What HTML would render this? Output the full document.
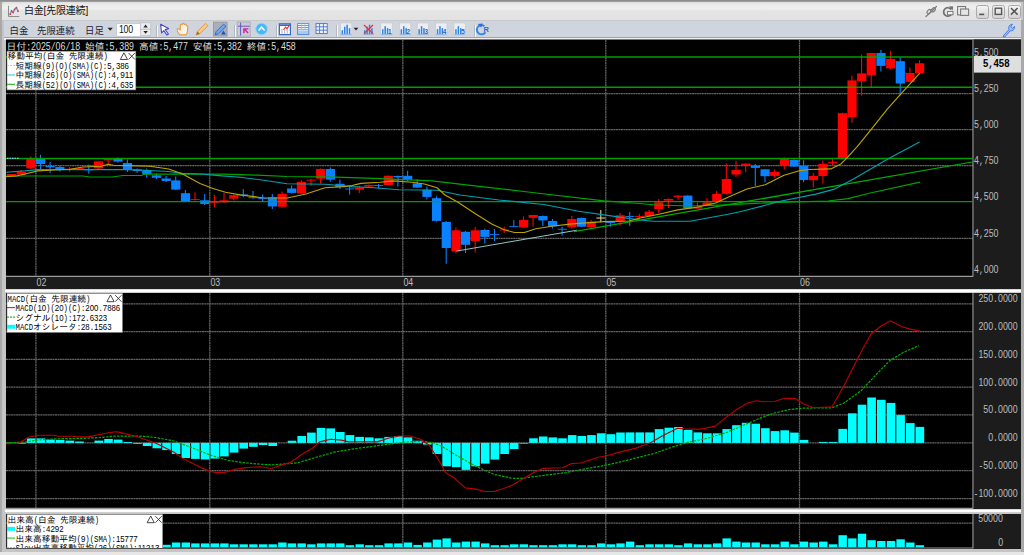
<!DOCTYPE html>
<html lang="ja"><head><meta charset="utf-8"><title>白金[先限連続]</title>
<style>
html,body{margin:0;padding:0;background:#b2b2b2;}
body{width:1024px;height:555px;overflow:hidden;position:relative;font-family:"Liberation Sans","Noto Sans CJK JP",sans-serif;}
#win{position:absolute;left:0;top:0;width:1024px;height:555px;background:#a9a9a9;overflow:hidden}
#inner{position:absolute;left:1.8px;top:2px;width:1021px;height:549.6px;background:#c5c5c5}
#rb{position:absolute;left:1020.6px;top:20px;width:2.2px;height:531.5px;background:#a9a9a9}
#topedge{position:absolute;left:0;top:0;width:1024px;height:2px;background:linear-gradient(#868686,#a4a4a4)}
#title{position:absolute;left:2px;top:2px;width:1019px;height:18px;background:linear-gradient(#dedede,#ebebeb 14%,#f0f0f0 35%,#e4e4e4 50%,#e2e2e2);border-radius:3px 3px 0 0}
#title .cap{position:absolute;left:22px;top:3px;font-size:10px;line-height:12px;color:#111;letter-spacing:-0.2px;white-space:nowrap}
#tool{position:absolute;left:4px;top:20px;width:1017px;height:17.7px;background:#d0d4dc;border-top:1px solid #c6c8cc;border-bottom:1px solid #9aa3b3;box-sizing:border-box}
#tool .t{position:absolute;top:4px;font-size:9.4px;line-height:11px;color:#223;white-space:nowrap}
#spin{position:absolute;left:111.5px;top:2px;width:35.5px;height:13.5px;background:#fff;border:1px solid #c8ccd4;box-sizing:border-box}
#spin span{position:absolute;left:2.5px;top:0px;font-size:10.2px;line-height:11.5px;color:#111;letter-spacing:-0.3px;transform:scaleX(.86);transform-origin:0 0}
.sep{position:absolute;top:3.5px;width:1px;height:12px;background:#f6f6f8;border-left:1px solid #b4b8c0}
#underline{position:absolute;left:4px;top:37.7px;width:1017px;height:2px;background:#f0f0f0}
.hsep{position:absolute;left:5px;width:1016px;height:4px;background:linear-gradient(#c4c4c4,#fff 35%,#fff 60%,#b8b8b8)}
#botedge{position:absolute;left:0;top:551.5px;width:1024px;height:3.5px;background:#e7e7e7}
svg text.j{font-family:"Liberation Mono","IPAGothic","Noto Sans CJK JP",monospace}
svg text.m{font-family:"Liberation Mono",monospace}
svg text.s{font-family:"Liberation Sans",sans-serif}
svg{position:absolute;left:0;top:0}
.wb{position:absolute;top:2.5px;width:13px;height:14px;border:1px solid #a9a9a9;border-radius:2.5px;background:linear-gradient(#f4f4f4,#d2d2d2);box-sizing:border-box}
</style></head><body>
<div id="win">
<div id="inner"></div><div id="rb"></div>
<div id="topedge"></div>
<div id="title"><span class="cap">白金[先限連続]</span>
<div class="wb" style="left:973.5px"></div><div class="wb" style="left:989.7px"></div><div class="wb" style="left:1005.5px"></div>
</div>
<div id="tool">
<span class="t" style="left:5.5px">白金</span><span class="t" style="left:33px">先限連続</span><span class="t" style="left:81px">日足</span>
<div id="spin"><span>100</span></div>
<div class="sep" style="left:151.5px"></div><div class="sep" style="left:229.5px"></div><div class="sep" style="left:271.5px"></div><div class="sep" style="left:331.5px"></div><div class="sep" style="left:469.5px"></div>
</div>
<div id="underline"></div>
<div class="hsep" style="top:289.3px"></div>
<div class="hsep" style="top:509.3px"></div>
<div id="botedge"></div>
<svg id="chart" width="1024" height="555" viewBox="0 0 1024 555">
<rect x="6" y="39.5" width="1015" height="249.5" fill="#000"/>
<rect x="974" y="39.5" width="47" height="249.5" fill="#1c1c1c"/>
<rect x="6" y="277" width="1015" height="12" fill="#1c1c1c"/>
<rect x="6" y="293" width="1015" height="216" fill="#000"/>
<rect x="974" y="293" width="47" height="216" fill="#1c1c1c"/>
<rect x="6" y="514" width="1015" height="35" fill="#000"/>
<rect x="974" y="514" width="47" height="35" fill="#1c1c1c"/>
<line x1="6" x2="973" y1="93.6" y2="93.6" stroke="#646464" stroke-width="1.25" stroke-dasharray="2 0.45"/>
<line x1="6" x2="973" y1="129.7" y2="129.7" stroke="#646464" stroke-width="1.25" stroke-dasharray="2 0.45"/>
<line x1="6" x2="973" y1="165.7" y2="165.7" stroke="#646464" stroke-width="1.25" stroke-dasharray="2 0.45"/>
<line x1="6" x2="973" y1="238.3" y2="238.3" stroke="#646464" stroke-width="1.25" stroke-dasharray="2 0.45"/>
<line x1="35.9" x2="35.9" y1="40" y2="276" stroke="#646464" stroke-width="1.25" stroke-dasharray="2 0.45"/>
<line x1="209.8" x2="209.8" y1="40" y2="276" stroke="#646464" stroke-width="1.25" stroke-dasharray="2 0.45"/>
<line x1="402.8" x2="402.8" y1="40" y2="276" stroke="#646464" stroke-width="1.25" stroke-dasharray="2 0.45"/>
<line x1="605.8" x2="605.8" y1="40" y2="276" stroke="#646464" stroke-width="1.25" stroke-dasharray="2 0.45"/>
<line x1="799.5" x2="799.5" y1="40" y2="276" stroke="#646464" stroke-width="1.25" stroke-dasharray="2 0.45"/>
<line x1="6" x2="973" y1="303.8" y2="303.8" stroke="#646464" stroke-width="1.25" stroke-dasharray="2 0.45"/>
<line x1="6" x2="973" y1="331.6" y2="331.6" stroke="#646464" stroke-width="1.25" stroke-dasharray="2 0.45"/>
<line x1="6" x2="973" y1="359.3" y2="359.3" stroke="#646464" stroke-width="1.25" stroke-dasharray="2 0.45"/>
<line x1="6" x2="973" y1="387.1" y2="387.1" stroke="#646464" stroke-width="1.25" stroke-dasharray="2 0.45"/>
<line x1="6" x2="973" y1="414.9" y2="414.9" stroke="#646464" stroke-width="1.25" stroke-dasharray="2 0.45"/>
<line x1="6" x2="973" y1="442.8" y2="442.8" stroke="#646464" stroke-width="1.25" stroke-dasharray="2 0.45"/>
<line x1="6" x2="973" y1="470.6" y2="470.6" stroke="#646464" stroke-width="1.25" stroke-dasharray="2 0.45"/>
<line x1="6" x2="973" y1="498.5" y2="498.5" stroke="#646464" stroke-width="1.25" stroke-dasharray="2 0.45"/>
<line x1="35.9" x2="35.9" y1="293" y2="508" stroke="#646464" stroke-width="1.25" stroke-dasharray="2 0.45"/>
<line x1="209.8" x2="209.8" y1="293" y2="508" stroke="#646464" stroke-width="1.25" stroke-dasharray="2 0.45"/>
<line x1="402.8" x2="402.8" y1="293" y2="508" stroke="#646464" stroke-width="1.25" stroke-dasharray="2 0.45"/>
<line x1="605.8" x2="605.8" y1="293" y2="508" stroke="#646464" stroke-width="1.25" stroke-dasharray="2 0.45"/>
<line x1="799.5" x2="799.5" y1="293" y2="508" stroke="#646464" stroke-width="1.25" stroke-dasharray="2 0.45"/>
<line x1="6" x2="973" y1="523.2" y2="523.2" stroke="#646464" stroke-width="1.25" stroke-dasharray="2 0.45"/>
<line x1="35.9" x2="35.9" y1="514" y2="548" stroke="#646464" stroke-width="1.25" stroke-dasharray="2 0.45"/>
<line x1="209.8" x2="209.8" y1="514" y2="548" stroke="#646464" stroke-width="1.25" stroke-dasharray="2 0.45"/>
<line x1="402.8" x2="402.8" y1="514" y2="548" stroke="#646464" stroke-width="1.25" stroke-dasharray="2 0.45"/>
<line x1="605.8" x2="605.8" y1="514" y2="548" stroke="#646464" stroke-width="1.25" stroke-dasharray="2 0.45"/>
<line x1="799.5" x2="799.5" y1="514" y2="548" stroke="#646464" stroke-width="1.25" stroke-dasharray="2 0.45"/>
<line x1="6" x2="973" y1="276.3" y2="276.3" stroke="#9a9a9a" stroke-width="1.2"/>
<line x1="973" x2="973" y1="40" y2="276.8" stroke="#9a9a9a" stroke-width="1.2"/>
<line x1="6" x2="973" y1="508.3" y2="508.3" stroke="#9a9a9a" stroke-width="1.2"/>
<line x1="973" x2="973" y1="293" y2="508.8" stroke="#9a9a9a" stroke-width="1.2"/>
<line x1="6" x2="973" y1="548" y2="548" stroke="#9a9a9a" stroke-width="1.2"/>
<line x1="973" x2="973" y1="514" y2="548.5" stroke="#9a9a9a" stroke-width="1.2"/>
<line x1="11.5" x2="11.5" y1="174" y2="176" stroke="#ff0000" stroke-width="1.1"/>
<rect x="7.0" y="174" width="9.2" height="2.0" fill="#ff0000"/>
<line x1="21.2" x2="21.2" y1="170" y2="175" stroke="#ff0000" stroke-width="1.1"/>
<rect x="16.7" y="172" width="9.2" height="2.7" fill="#ff0000"/>
<line x1="30.8" x2="30.8" y1="156.4" y2="169" stroke="#ff0000" stroke-width="1.1"/>
<rect x="26.3" y="158.9" width="9.2" height="9.5" fill="#ff0000"/>
<line x1="40.5" x2="40.5" y1="154.9" y2="169.6" stroke="#0a82ff" stroke-width="1.1"/>
<rect x="36.0" y="159" width="9.2" height="5.0" fill="#0a82ff"/>
<line x1="50.1" x2="50.1" y1="162" y2="173" stroke="#0a82ff" stroke-width="1.1"/>
<rect x="45.6" y="166" width="9.2" height="1.3" fill="#0a82ff"/>
<line x1="59.8" x2="59.8" y1="165.8" y2="171.5" stroke="#0a82ff" stroke-width="1.1"/>
<rect x="55.3" y="167" width="9.2" height="2.3" fill="#0a82ff"/>
<line x1="69.5" x2="69.5" y1="167" y2="171.5" stroke="#ff0000" stroke-width="1.1"/>
<rect x="65.0" y="168.7" width="9.2" height="1.3" fill="#ff0000"/>
<line x1="79.1" x2="79.1" y1="167.5" y2="169.5" stroke="#ff0000" stroke-width="1.1"/>
<rect x="74.6" y="168" width="9.2" height="0.9" fill="#ff0000"/>
<line x1="88.8" x2="88.8" y1="164.6" y2="173.8" stroke="#0a82ff" stroke-width="1.1"/>
<rect x="84.3" y="169.2" width="9.2" height="1.1" fill="#0a82ff"/>
<line x1="98.4" x2="98.4" y1="161" y2="169" stroke="#ff0000" stroke-width="1.1"/>
<rect x="93.9" y="161.4" width="9.2" height="7.0" fill="#ff0000"/>
<line x1="108.1" x2="108.1" y1="158.5" y2="164.6" stroke="#ff0000" stroke-width="1.1"/>
<rect x="103.6" y="159" width="9.2" height="1.4" fill="#ff0000"/>
<line x1="117.8" x2="117.8" y1="157.4" y2="162.5" stroke="#0a82ff" stroke-width="1.1"/>
<rect x="113.3" y="158.8" width="9.2" height="2.8" fill="#0a82ff"/>
<line x1="127.4" x2="127.4" y1="159.5" y2="172" stroke="#0a82ff" stroke-width="1.1"/>
<rect x="122.9" y="163" width="9.2" height="6.6" fill="#0a82ff"/>
<line x1="137.1" x2="137.1" y1="168.4" y2="172.8" stroke="#0a82ff" stroke-width="1.1"/>
<rect x="132.6" y="169.3" width="9.2" height="1.7" fill="#0a82ff"/>
<line x1="146.7" x2="146.7" y1="168.4" y2="177.8" stroke="#0a82ff" stroke-width="1.1"/>
<rect x="142.2" y="170" width="9.2" height="4.0" fill="#0a82ff"/>
<line x1="156.4" x2="156.4" y1="173.4" y2="179" stroke="#0a82ff" stroke-width="1.1"/>
<rect x="151.9" y="175.3" width="9.2" height="2.5" fill="#0a82ff"/>
<line x1="166.1" x2="166.1" y1="176" y2="182" stroke="#0a82ff" stroke-width="1.1"/>
<rect x="161.6" y="178.5" width="9.2" height="2.5" fill="#0a82ff"/>
<line x1="175.7" x2="175.7" y1="176.6" y2="190" stroke="#0a82ff" stroke-width="1.1"/>
<rect x="171.2" y="180.4" width="9.2" height="9.2" fill="#0a82ff"/>
<line x1="185.4" x2="185.4" y1="190" y2="202" stroke="#0a82ff" stroke-width="1.1"/>
<rect x="180.9" y="193.2" width="9.2" height="8.2" fill="#0a82ff"/>
<line x1="195.0" x2="195.0" y1="192.3" y2="200.5" stroke="#ff0000" stroke-width="1.1"/>
<rect x="190.5" y="199" width="9.2" height="0.9" fill="#ff0000"/>
<line x1="204.7" x2="204.7" y1="194" y2="205" stroke="#0a82ff" stroke-width="1.1"/>
<rect x="200.2" y="200.3" width="9.2" height="3.7" fill="#0a82ff"/>
<line x1="214.4" x2="214.4" y1="194.9" y2="207.5" stroke="#ff0000" stroke-width="1.1"/>
<rect x="209.9" y="202.2" width="9.2" height="0.9" fill="#ff0000"/>
<line x1="224.0" x2="224.0" y1="193" y2="203" stroke="#ff0000" stroke-width="1.1"/>
<rect x="219.5" y="200.3" width="9.2" height="2.0" fill="#ff0000"/>
<line x1="233.7" x2="233.7" y1="194.5" y2="200.5" stroke="#ff0000" stroke-width="1.1"/>
<rect x="229.2" y="195.2" width="9.2" height="3.4" fill="#ff0000"/>
<line x1="243.3" x2="243.3" y1="189" y2="197" stroke="#0a82ff" stroke-width="1.1"/>
<rect x="238.8" y="194.4" width="9.2" height="0.9" fill="#0a82ff"/>
<line x1="253.0" x2="253.0" y1="191" y2="198.5" stroke="#0a82ff" stroke-width="1.1"/>
<rect x="248.5" y="197.3" width="9.2" height="0.9" fill="#0a82ff"/>
<line x1="262.7" x2="262.7" y1="194.4" y2="201.5" stroke="#0a82ff" stroke-width="1.1"/>
<rect x="258.2" y="198" width="9.2" height="0.9" fill="#0a82ff"/>
<line x1="272.3" x2="272.3" y1="193.9" y2="209" stroke="#0a82ff" stroke-width="1.1"/>
<rect x="267.8" y="197.3" width="9.2" height="9.1" fill="#0a82ff"/>
<line x1="282.0" x2="282.0" y1="191.6" y2="207.8" stroke="#ff0000" stroke-width="1.1"/>
<rect x="277.5" y="193.9" width="9.2" height="12.8" fill="#ff0000"/>
<line x1="291.6" x2="291.6" y1="185.6" y2="193.5" stroke="#0a82ff" stroke-width="1.1"/>
<rect x="287.1" y="188.5" width="9.2" height="4.4" fill="#0a82ff"/>
<line x1="301.3" x2="301.3" y1="180" y2="194" stroke="#ff0000" stroke-width="1.1"/>
<rect x="296.8" y="182" width="9.2" height="11.5" fill="#ff0000"/>
<line x1="311.0" x2="311.0" y1="179" y2="186" stroke="#ff0000" stroke-width="1.1"/>
<rect x="306.5" y="179.6" width="9.2" height="1.0" fill="#ff0000"/>
<line x1="320.6" x2="320.6" y1="168.5" y2="183.8" stroke="#ff0000" stroke-width="1.1"/>
<rect x="316.1" y="169" width="9.2" height="9.7" fill="#ff0000"/>
<line x1="330.3" x2="330.3" y1="167.6" y2="181.8" stroke="#0a82ff" stroke-width="1.1"/>
<rect x="325.8" y="169" width="9.2" height="10.6" fill="#0a82ff"/>
<line x1="339.9" x2="339.9" y1="179.6" y2="188.9" stroke="#0a82ff" stroke-width="1.1"/>
<rect x="335.4" y="183.8" width="9.2" height="3.2" fill="#0a82ff"/>
<line x1="349.6" x2="349.6" y1="186.6" y2="194.8" stroke="#0a82ff" stroke-width="1.1"/>
<rect x="345.1" y="188.5" width="9.2" height="0.9" fill="#0a82ff"/>
<line x1="359.3" x2="359.3" y1="186" y2="193" stroke="#ff0000" stroke-width="1.1"/>
<rect x="354.8" y="187.6" width="9.2" height="2.1" fill="#ff0000"/>
<line x1="368.9" x2="368.9" y1="184.5" y2="187" stroke="#ff0000" stroke-width="1.1"/>
<rect x="364.4" y="185" width="9.2" height="1.6" fill="#ff0000"/>
<line x1="378.6" x2="378.6" y1="184" y2="188.5" stroke="#0a82ff" stroke-width="1.1"/>
<rect x="374.1" y="185" width="9.2" height="0.9" fill="#0a82ff"/>
<line x1="388.2" x2="388.2" y1="175.5" y2="185.5" stroke="#ff0000" stroke-width="1.1"/>
<rect x="383.7" y="175.8" width="9.2" height="9.2" fill="#ff0000"/>
<line x1="397.9" x2="397.9" y1="175.5" y2="186.6" stroke="#0a82ff" stroke-width="1.1"/>
<rect x="393.4" y="176" width="9.2" height="1.3" fill="#0a82ff"/>
<line x1="407.6" x2="407.6" y1="170.8" y2="181" stroke="#0a82ff" stroke-width="1.1"/>
<rect x="403.1" y="175.8" width="9.2" height="3.8" fill="#0a82ff"/>
<line x1="417.2" x2="417.2" y1="179.3" y2="188" stroke="#0a82ff" stroke-width="1.1"/>
<rect x="412.7" y="183.4" width="9.2" height="4.2" fill="#0a82ff"/>
<line x1="426.9" x2="426.9" y1="186.6" y2="199.4" stroke="#0a82ff" stroke-width="1.1"/>
<rect x="422.4" y="189.7" width="9.2" height="7.2" fill="#0a82ff"/>
<line x1="436.5" x2="436.5" y1="196.3" y2="221.5" stroke="#0a82ff" stroke-width="1.1"/>
<rect x="432.0" y="198.2" width="9.2" height="22.7" fill="#0a82ff"/>
<line x1="446.2" x2="446.2" y1="220.9" y2="263.7" stroke="#0a82ff" stroke-width="1.1"/>
<rect x="441.7" y="222" width="9.2" height="26.0" fill="#0a82ff"/>
<line x1="455.9" x2="455.9" y1="227.5" y2="253.6" stroke="#ff0000" stroke-width="1.1"/>
<rect x="451.4" y="230.3" width="9.2" height="21.1" fill="#ff0000"/>
<line x1="465.5" x2="465.5" y1="231" y2="253" stroke="#0a82ff" stroke-width="1.1"/>
<rect x="461.0" y="231.8" width="9.2" height="13.0" fill="#0a82ff"/>
<line x1="475.2" x2="475.2" y1="227" y2="252.4" stroke="#ff0000" stroke-width="1.1"/>
<rect x="470.7" y="230.3" width="9.2" height="10.7" fill="#ff0000"/>
<line x1="484.8" x2="484.8" y1="228.8" y2="243.5" stroke="#0a82ff" stroke-width="1.1"/>
<rect x="480.3" y="230" width="9.2" height="6.9" fill="#0a82ff"/>
<line x1="494.5" x2="494.5" y1="229" y2="241" stroke="#0a82ff" stroke-width="1.1"/>
<rect x="490.0" y="234.2" width="9.2" height="0.9" fill="#0a82ff"/>
<line x1="504.2" x2="504.2" y1="226.8" y2="232.8" stroke="#ff0000" stroke-width="1.1"/>
<rect x="499.7" y="229.5" width="9.2" height="0.9" fill="#ff0000"/>
<line x1="513.8" x2="513.8" y1="220.2" y2="227" stroke="#0a82ff" stroke-width="1.1"/>
<rect x="509.3" y="226.2" width="9.2" height="0.9" fill="#0a82ff"/>
<line x1="523.5" x2="523.5" y1="216.4" y2="228" stroke="#ff0000" stroke-width="1.1"/>
<rect x="519.0" y="220" width="9.2" height="7.5" fill="#ff0000"/>
<line x1="533.1" x2="533.1" y1="215" y2="226.6" stroke="#ff0000" stroke-width="1.1"/>
<rect x="528.6" y="215" width="9.2" height="2.8" fill="#ff0000"/>
<line x1="542.8" x2="542.8" y1="215.5" y2="226" stroke="#0a82ff" stroke-width="1.1"/>
<rect x="538.3" y="216" width="9.2" height="4.4" fill="#0a82ff"/>
<line x1="552.5" x2="552.5" y1="219" y2="228.5" stroke="#0a82ff" stroke-width="1.1"/>
<rect x="548.0" y="221" width="9.2" height="5.4" fill="#0a82ff"/>
<line x1="562.1" x2="562.1" y1="226.7" y2="235.5" stroke="#0a82ff" stroke-width="1.1"/>
<rect x="557.6" y="228.8" width="9.2" height="0.9" fill="#0a82ff"/>
<line x1="571.8" x2="571.8" y1="216" y2="228.5" stroke="#ff0000" stroke-width="1.1"/>
<rect x="567.3" y="219" width="9.2" height="8.0" fill="#ff0000"/>
<line x1="581.4" x2="581.4" y1="217.5" y2="227" stroke="#0a82ff" stroke-width="1.1"/>
<rect x="576.9" y="218" width="9.2" height="8.7" fill="#0a82ff"/>
<line x1="591.1" x2="591.1" y1="219.7" y2="229" stroke="#ff0000" stroke-width="1.1"/>
<rect x="586.6" y="221.6" width="9.2" height="5.7" fill="#ff0000"/>
<line x1="596.4" x2="605.2" y1="218" y2="218" stroke="#d8d084" stroke-width="1.1"/>
<line x1="600.8" x2="600.8" y1="210" y2="222.2" stroke="#d8d084" stroke-width="1.1"/>
<line x1="610.4" x2="610.4" y1="221.6" y2="226.7" stroke="#0a82ff" stroke-width="1.1"/>
<rect x="605.9" y="222" width="9.2" height="0.9" fill="#0a82ff"/>
<line x1="620.1" x2="620.1" y1="213" y2="225.6" stroke="#ff0000" stroke-width="1.1"/>
<rect x="615.6" y="215.3" width="9.2" height="6.3" fill="#ff0000"/>
<line x1="629.7" x2="629.7" y1="212" y2="226" stroke="#0a82ff" stroke-width="1.1"/>
<rect x="625.2" y="216" width="9.2" height="0.9" fill="#0a82ff"/>
<line x1="639.4" x2="639.4" y1="214" y2="218.5" stroke="#ff0000" stroke-width="1.1"/>
<rect x="634.9" y="216" width="9.2" height="0.9" fill="#ff0000"/>
<line x1="649.1" x2="649.1" y1="210" y2="216.5" stroke="#ff0000" stroke-width="1.1"/>
<rect x="644.6" y="211.6" width="9.2" height="4.5" fill="#ff0000"/>
<line x1="658.7" x2="658.7" y1="199" y2="213" stroke="#ff0000" stroke-width="1.1"/>
<rect x="654.2" y="202.3" width="9.2" height="6.7" fill="#ff0000"/>
<line x1="668.4" x2="668.4" y1="198.5" y2="208" stroke="#ff0000" stroke-width="1.1"/>
<rect x="663.9" y="199" width="9.2" height="1.6" fill="#ff0000"/>
<line x1="678.0" x2="678.0" y1="195.6" y2="199.8" stroke="#ff0000" stroke-width="1.1"/>
<rect x="673.5" y="195.6" width="9.2" height="1.3" fill="#ff0000"/>
<line x1="687.7" x2="687.7" y1="195.3" y2="209" stroke="#0a82ff" stroke-width="1.1"/>
<rect x="683.2" y="195.6" width="9.2" height="13.0" fill="#0a82ff"/>
<line x1="697.4" x2="697.4" y1="202.3" y2="209" stroke="#ff0000" stroke-width="1.1"/>
<rect x="692.9" y="206.7" width="9.2" height="1.9" fill="#ff0000"/>
<line x1="707.0" x2="707.0" y1="198" y2="206" stroke="#ff0000" stroke-width="1.1"/>
<rect x="702.5" y="202.3" width="9.2" height="3.4" fill="#ff0000"/>
<line x1="716.7" x2="716.7" y1="191" y2="201.5" stroke="#ff0000" stroke-width="1.1"/>
<rect x="712.2" y="194" width="9.2" height="7.0" fill="#ff0000"/>
<line x1="726.3" x2="726.3" y1="163.6" y2="194.5" stroke="#ff0000" stroke-width="1.1"/>
<rect x="721.8" y="179" width="9.2" height="14.8" fill="#ff0000"/>
<line x1="736.0" x2="736.0" y1="161" y2="177" stroke="#ff0000" stroke-width="1.1"/>
<rect x="731.5" y="170" width="9.2" height="4.5" fill="#ff0000"/>
<line x1="745.7" x2="745.7" y1="163.6" y2="172.2" stroke="#ff0000" stroke-width="1.1"/>
<rect x="741.2" y="163.6" width="9.2" height="1.8" fill="#ff0000"/>
<line x1="755.3" x2="755.3" y1="164" y2="186" stroke="#0a82ff" stroke-width="1.1"/>
<rect x="750.8" y="166" width="9.2" height="1.9" fill="#0a82ff"/>
<line x1="765.0" x2="765.0" y1="169" y2="182.6" stroke="#0a82ff" stroke-width="1.1"/>
<rect x="760.5" y="169.3" width="9.2" height="6.9" fill="#0a82ff"/>
<line x1="774.6" x2="774.6" y1="169.5" y2="177.5" stroke="#ff0000" stroke-width="1.1"/>
<rect x="770.1" y="172" width="9.2" height="3.9" fill="#ff0000"/>
<line x1="784.3" x2="784.3" y1="157.4" y2="169.6" stroke="#ff0000" stroke-width="1.1"/>
<rect x="779.8" y="159" width="9.2" height="6.7" fill="#ff0000"/>
<line x1="794.0" x2="794.0" y1="159.5" y2="167" stroke="#0a82ff" stroke-width="1.1"/>
<rect x="789.5" y="160" width="9.2" height="6.5" fill="#0a82ff"/>
<line x1="803.6" x2="803.6" y1="160.2" y2="182.3" stroke="#0a82ff" stroke-width="1.1"/>
<rect x="799.1" y="166" width="9.2" height="14.0" fill="#0a82ff"/>
<line x1="813.3" x2="813.3" y1="173" y2="187.4" stroke="#ff0000" stroke-width="1.1"/>
<rect x="808.8" y="176" width="9.2" height="4.2" fill="#ff0000"/>
<line x1="822.9" x2="822.9" y1="160.6" y2="183.5" stroke="#ff0000" stroke-width="1.1"/>
<rect x="818.4" y="163.8" width="9.2" height="12.2" fill="#ff0000"/>
<line x1="832.6" x2="832.6" y1="159" y2="166" stroke="#ff0000" stroke-width="1.1"/>
<rect x="828.1" y="162" width="9.2" height="0.9" fill="#ff0000"/>
<line x1="842.3" x2="842.3" y1="112.8" y2="158.5" stroke="#ff0000" stroke-width="1.1"/>
<rect x="837.8" y="113.2" width="9.2" height="44.8" fill="#ff0000"/>
<line x1="851.9" x2="851.9" y1="75.6" y2="122.7" stroke="#ff0000" stroke-width="1.1"/>
<rect x="847.4" y="80.4" width="9.2" height="36.6" fill="#ff0000"/>
<line x1="861.6" x2="861.6" y1="54.5" y2="95.5" stroke="#ff0000" stroke-width="1.1"/>
<rect x="857.1" y="73.4" width="9.2" height="7.6" fill="#ff0000"/>
<line x1="871.2" x2="871.2" y1="53" y2="87.3" stroke="#ff0000" stroke-width="1.1"/>
<rect x="866.7" y="53" width="9.2" height="22.3" fill="#ff0000"/>
<line x1="880.9" x2="880.9" y1="49.8" y2="71.5" stroke="#0a82ff" stroke-width="1.1"/>
<rect x="876.4" y="53" width="9.2" height="12.9" fill="#0a82ff"/>
<line x1="890.6" x2="890.6" y1="50.7" y2="69.6" stroke="#ff0000" stroke-width="1.1"/>
<rect x="886.1" y="58.9" width="9.2" height="9.5" fill="#ff0000"/>
<line x1="900.2" x2="900.2" y1="57.7" y2="95.5" stroke="#0a82ff" stroke-width="1.1"/>
<rect x="895.7" y="61.2" width="9.2" height="22.3" fill="#0a82ff"/>
<line x1="909.9" x2="909.9" y1="67.5" y2="82.3" stroke="#ff0000" stroke-width="1.1"/>
<rect x="905.4" y="73" width="9.2" height="8.9" fill="#ff0000"/>
<line x1="919.5" x2="919.5" y1="60.2" y2="74.2" stroke="#ff0000" stroke-width="1.1"/>
<rect x="915.0" y="63.3" width="9.2" height="10.1" fill="#ff0000"/>
<line x1="6" x2="972.5" y1="57" y2="57" stroke="#00b000" stroke-width="1.45" opacity="0.9"/>
<line x1="6" x2="972.5" y1="87.3" y2="87.3" stroke="#00b000" stroke-width="1.45" opacity="0.9"/>
<line x1="6" x2="972.5" y1="158.4" y2="158.4" stroke="#00b000" stroke-width="1.45" opacity="0.9"/>
<line x1="6" x2="972.5" y1="201.6" y2="201.6" stroke="#00b000" stroke-width="1.45" opacity="0.9"/>
<line x1="7" x2="19" y1="158.3" y2="158.3" stroke="#7ad0e8" stroke-width="1.3" stroke-dasharray="1.5 1"/>
<line x1="456.4" y1="251.1" x2="577" y2="230.2" stroke="#8cc8c6" stroke-width="1"/>
<line x1="574" y1="231.6" x2="972.3" y2="162" stroke="#00ac00" stroke-width="1.25"/>
<polyline points="6.0,176.0 83.0,176.0 90.0,177.0 112.0,177.0 123.0,175.5 142.0,175.3 145.0,174.0 224.0,174.2 257.0,175.2 287.0,176.5 336.0,177.1 374.0,178.4 403.0,179.6 432.0,180.9 464.0,184.7 528.0,192.0 604.0,200.8 640.0,203.5 656.0,205.0 690.0,206.0 728.0,204.8 740.0,204.2 778.0,202.3 828.0,201.0 848.0,198.6 868.0,193.5 920.0,182.2" fill="none" stroke="#00a400" stroke-width="1.2" stroke-linejoin="round"/>
<polyline points="6.3,172.2 25.0,170.9 38.0,169.6 128.0,169.6 143.5,170.3 168.7,171.5 182.6,173.4 200.3,174.0 219.0,175.6 240.0,177.2 262.0,180.0 287.0,183.8 325.0,184.2 352.0,186.6 374.0,187.8 399.0,189.7 437.0,190.3 460.0,195.0 499.0,200.0 544.0,204.5 578.4,211.3 616.3,216.6 640.0,220.0 652.6,221.2 690.0,221.2 728.0,214.3 740.0,211.8 768.0,204.5 777.8,201.7 815.7,194.1 834.6,189.1 853.5,179.0 869.8,169.4 888.7,158.4 919.6,142.0" fill="none" stroke="#00a0b0" stroke-width="1.15" stroke-linejoin="round"/>
<polyline points="6.0,176.8 16.4,176.0 25.0,174.0 37.8,170.9 54.0,170.0 70.0,169.3 83.0,167.0 101.0,166.2 108.4,164.2 113.5,165.2 128.0,165.6 150.0,166.2 168.7,169.0 182.6,174.0 200.0,183.5 213.0,188.5 225.5,192.3 240.0,194.9 262.0,197.7 287.0,198.0 306.0,194.0 325.0,187.8 344.0,186.6 352.0,185.5 361.0,183.4 380.0,182.2 393.0,180.9 412.0,182.2 424.5,184.0 437.0,187.8 445.0,195.0 457.6,202.0 475.0,213.5 491.7,224.0 504.3,229.7 514.4,232.5 524.4,232.5 535.8,228.8 544.0,227.5 553.2,226.0 572.0,223.9 603.7,221.6 629.0,221.0 640.0,218.0 659.0,214.3 677.8,209.9 696.7,207.3 715.7,203.0 728.0,197.2 747.0,189.0 765.2,184.7 784.0,175.2 799.3,170.8 809.4,169.5 830.8,168.9 840.9,163.9 847.2,157.6 857.2,146.7 871.0,129.6 887.5,108.8 900.7,94.2 919.6,73.4" fill="none" stroke="#bca400" stroke-width="1.15" stroke-linejoin="round"/>
<rect x="7.6" y="442.9" width="8.6" height="0.7" fill="#00ffff"/>
<rect x="17.3" y="442.9" width="8.6" height="0.7" fill="#00ffff"/>
<rect x="26.9" y="438.4" width="8.6" height="4.5" fill="#00ffff"/>
<rect x="36.6" y="438.4" width="8.6" height="4.5" fill="#00ffff"/>
<rect x="46.2" y="439.6" width="8.6" height="3.3" fill="#00ffff"/>
<rect x="55.9" y="440.0" width="8.6" height="2.9" fill="#00ffff"/>
<rect x="65.6" y="440.6" width="8.6" height="2.3" fill="#00ffff"/>
<rect x="75.2" y="441.5" width="8.6" height="1.4" fill="#00ffff"/>
<rect x="94.5" y="440.6" width="8.6" height="2.3" fill="#00ffff"/>
<rect x="104.2" y="439.0" width="8.6" height="3.9" fill="#00ffff"/>
<rect x="113.9" y="439.6" width="8.6" height="3.3" fill="#00ffff"/>
<rect x="123.5" y="442.0" width="8.6" height="0.9" fill="#00ffff"/>
<rect x="133.2" y="442.9" width="8.6" height="0.9" fill="#00ffff"/>
<rect x="142.8" y="442.9" width="8.6" height="3.1" fill="#00ffff"/>
<rect x="152.5" y="442.9" width="8.6" height="5.4" fill="#00ffff"/>
<rect x="162.2" y="442.9" width="8.6" height="7.2" fill="#00ffff"/>
<rect x="171.8" y="442.9" width="8.6" height="11.1" fill="#00ffff"/>
<rect x="181.5" y="442.9" width="8.6" height="15.1" fill="#00ffff"/>
<rect x="191.1" y="442.9" width="8.6" height="16.0" fill="#00ffff"/>
<rect x="200.8" y="442.9" width="8.6" height="16.6" fill="#00ffff"/>
<rect x="210.5" y="442.9" width="8.6" height="15.7" fill="#00ffff"/>
<rect x="220.1" y="442.9" width="8.6" height="13.5" fill="#00ffff"/>
<rect x="229.8" y="442.9" width="8.6" height="9.7" fill="#00ffff"/>
<rect x="239.4" y="442.9" width="8.6" height="5.7" fill="#00ffff"/>
<rect x="249.1" y="442.9" width="8.6" height="3.9" fill="#00ffff"/>
<rect x="258.8" y="442.9" width="8.6" height="2.1" fill="#00ffff"/>
<rect x="268.4" y="442.9" width="8.6" height="3.1" fill="#00ffff"/>
<rect x="287.7" y="440.7" width="8.6" height="2.2" fill="#00ffff"/>
<rect x="297.4" y="436.0" width="8.6" height="6.9" fill="#00ffff"/>
<rect x="307.1" y="432.6" width="8.6" height="10.3" fill="#00ffff"/>
<rect x="316.7" y="427.9" width="8.6" height="15.0" fill="#00ffff"/>
<rect x="326.4" y="428.4" width="8.6" height="14.5" fill="#00ffff"/>
<rect x="336.0" y="432.0" width="8.6" height="10.9" fill="#00ffff"/>
<rect x="345.7" y="435.1" width="8.6" height="7.8" fill="#00ffff"/>
<rect x="355.4" y="436.9" width="8.6" height="6.0" fill="#00ffff"/>
<rect x="365.0" y="437.4" width="8.6" height="5.5" fill="#00ffff"/>
<rect x="374.7" y="438.3" width="8.6" height="4.6" fill="#00ffff"/>
<rect x="384.3" y="436.9" width="8.6" height="6.0" fill="#00ffff"/>
<rect x="394.0" y="436.0" width="8.6" height="6.9" fill="#00ffff"/>
<rect x="403.7" y="437.4" width="8.6" height="5.5" fill="#00ffff"/>
<rect x="413.3" y="440.7" width="8.6" height="2.2" fill="#00ffff"/>
<rect x="423.0" y="442.9" width="8.6" height="1.7" fill="#00ffff"/>
<rect x="432.6" y="442.9" width="8.6" height="11.1" fill="#00ffff"/>
<rect x="442.3" y="442.9" width="8.6" height="23.4" fill="#00ffff"/>
<rect x="452.0" y="442.9" width="8.6" height="24.3" fill="#00ffff"/>
<rect x="461.6" y="442.9" width="8.6" height="27.0" fill="#00ffff"/>
<rect x="471.3" y="442.9" width="8.6" height="23.4" fill="#00ffff"/>
<rect x="480.9" y="442.9" width="8.6" height="20.7" fill="#00ffff"/>
<rect x="490.6" y="442.9" width="8.6" height="16.7" fill="#00ffff"/>
<rect x="500.3" y="442.9" width="8.6" height="11.1" fill="#00ffff"/>
<rect x="509.9" y="442.9" width="8.6" height="6.2" fill="#00ffff"/>
<rect x="519.6" y="442.9" width="8.6" height="0.7" fill="#00ffff"/>
<rect x="529.2" y="438.3" width="8.6" height="4.6" fill="#00ffff"/>
<rect x="538.9" y="436.5" width="8.6" height="6.4" fill="#00ffff"/>
<rect x="548.6" y="437.4" width="8.6" height="5.5" fill="#00ffff"/>
<rect x="558.2" y="438.3" width="8.6" height="4.6" fill="#00ffff"/>
<rect x="567.9" y="435.1" width="8.6" height="7.8" fill="#00ffff"/>
<rect x="577.5" y="436.0" width="8.6" height="6.9" fill="#00ffff"/>
<rect x="587.2" y="435.1" width="8.6" height="7.8" fill="#00ffff"/>
<rect x="596.9" y="433.3" width="8.6" height="9.6" fill="#00ffff"/>
<rect x="606.5" y="434.2" width="8.6" height="8.7" fill="#00ffff"/>
<rect x="616.2" y="432.5" width="8.6" height="10.4" fill="#00ffff"/>
<rect x="625.8" y="432.4" width="8.6" height="10.5" fill="#00ffff"/>
<rect x="635.5" y="432.4" width="8.6" height="10.5" fill="#00ffff"/>
<rect x="645.2" y="432.4" width="8.6" height="10.5" fill="#00ffff"/>
<rect x="654.8" y="429.1" width="8.6" height="13.8" fill="#00ffff"/>
<rect x="664.5" y="427.7" width="8.6" height="15.2" fill="#00ffff"/>
<rect x="674.1" y="427.0" width="8.6" height="15.9" fill="#00ffff"/>
<rect x="683.8" y="430.0" width="8.6" height="12.9" fill="#00ffff"/>
<rect x="693.5" y="432.4" width="8.6" height="10.5" fill="#00ffff"/>
<rect x="703.1" y="433.3" width="8.6" height="9.6" fill="#00ffff"/>
<rect x="712.8" y="433.3" width="8.6" height="9.6" fill="#00ffff"/>
<rect x="722.4" y="429.1" width="8.6" height="13.8" fill="#00ffff"/>
<rect x="732.1" y="425.2" width="8.6" height="17.7" fill="#00ffff"/>
<rect x="741.8" y="422.8" width="8.6" height="20.1" fill="#00ffff"/>
<rect x="751.4" y="423.7" width="8.6" height="19.2" fill="#00ffff"/>
<rect x="761.1" y="428.2" width="8.6" height="14.7" fill="#00ffff"/>
<rect x="770.7" y="431.1" width="8.6" height="11.8" fill="#00ffff"/>
<rect x="780.4" y="430.3" width="8.6" height="12.6" fill="#00ffff"/>
<rect x="790.1" y="432.6" width="8.6" height="10.3" fill="#00ffff"/>
<rect x="799.7" y="439.9" width="8.6" height="3.0" fill="#00ffff"/>
<rect x="819.0" y="441.9" width="8.6" height="1.0" fill="#00ffff"/>
<rect x="828.7" y="441.9" width="8.6" height="1.0" fill="#00ffff"/>
<rect x="838.4" y="428.9" width="8.6" height="14.0" fill="#00ffff"/>
<rect x="848.0" y="413.3" width="8.6" height="29.6" fill="#00ffff"/>
<rect x="857.7" y="404.7" width="8.6" height="38.2" fill="#00ffff"/>
<rect x="867.3" y="397.5" width="8.6" height="45.4" fill="#00ffff"/>
<rect x="877.0" y="399.8" width="8.6" height="43.1" fill="#00ffff"/>
<rect x="886.7" y="402.9" width="8.6" height="40.0" fill="#00ffff"/>
<rect x="896.3" y="415.1" width="8.6" height="27.8" fill="#00ffff"/>
<rect x="906.0" y="423.1" width="8.6" height="19.8" fill="#00ffff"/>
<rect x="915.6" y="426.9" width="8.6" height="16.0" fill="#00ffff"/>
<polyline points="6.3,443.0 25.0,442.0 38.0,440.0 56.7,438.8 82.0,438.4 101.0,437.5 113.5,436.2 138.0,436.0 156.0,437.5 174.0,441.0 192.0,447.7 210.0,455.0 228.0,460.4 246.0,463.0 264.0,464.5 273.0,464.9 291.0,463.4 298.0,462.7 316.0,457.3 334.0,452.2 352.0,449.1 370.0,446.8 388.0,444.3 406.0,441.9 424.0,441.4 433.0,442.8 442.0,446.4 458.0,456.4 476.0,466.3 494.0,474.4 512.0,478.3 521.0,478.3 530.0,477.1 548.0,474.9 566.0,472.6 584.0,469.0 602.0,465.9 618.0,462.5 636.0,458.0 654.0,453.5 672.0,447.2 690.0,441.8 708.0,438.2 726.0,432.7 744.0,425.0 762.0,417.4 774.4,413.0 788.8,409.6 803.3,408.1 832.0,407.8 843.6,403.2 861.0,390.8 875.3,375.5 889.8,360.6 904.2,351.9 919.2,345.6" fill="none" stroke="#00b000" stroke-width="1.2" stroke-dasharray="2.5 1.2"/>
<polyline points="6.3,444.0 19.0,443.0 29.0,437.0 39.0,435.2 54.0,435.2 58.0,436.2 73.0,436.2 77.0,436.9 88.0,436.9 108.4,432.7 116.0,431.7 120.0,432.4 138.0,437.0 156.0,443.2 174.0,452.3 183.0,458.6 192.0,463.0 201.0,467.6 210.0,471.2 215.5,472.4 224.5,472.4 235.3,469.4 246.0,467.6 260.5,466.7 271.4,468.5 282.0,464.9 290.8,462.3 301.6,454.5 312.4,448.2 319.6,441.9 330.5,439.2 341.3,440.1 348.5,441.9 377.3,441.9 388.0,438.3 399.0,436.0 409.7,436.0 420.5,439.2 429.5,445.5 436.8,457.3 440.0,461.8 445.4,472.6 454.4,478.0 465.2,487.9 476.0,489.1 485.0,491.5 494.0,491.5 503.0,488.8 512.0,485.2 522.9,478.9 533.7,472.6 542.7,468.4 562.5,467.7 571.5,463.6 580.5,463.0 598.6,457.3 605.8,456.0 618.0,452.6 636.0,448.1 650.5,442.7 663.0,435.5 677.5,428.2 686.5,429.1 701.0,429.1 715.3,426.1 726.0,417.4 737.0,409.3 747.7,403.0 756.8,400.7 762.0,401.8 774.4,401.5 784.5,398.3 794.6,398.3 803.3,403.8 813.3,407.8 832.0,406.7 843.6,386.5 858.0,357.7 871.0,334.0 881.0,326.0 890.3,320.8 901.3,326.5 910.0,329.1 920.0,331.1" fill="none" stroke="#ba0000" stroke-width="1.15" stroke-linejoin="round"/>
<rect x="162.3" y="544.8" width="8.4" height="2.4" fill="#00ffff"/>
<rect x="171.9" y="542.5" width="8.4" height="4.7" fill="#00ffff"/>
<rect x="181.6" y="542.5" width="8.4" height="4.7" fill="#00ffff"/>
<rect x="191.2" y="543.4" width="8.4" height="3.8" fill="#00ffff"/>
<rect x="200.9" y="543.4" width="8.4" height="3.8" fill="#00ffff"/>
<rect x="210.6" y="543.4" width="8.4" height="3.8" fill="#00ffff"/>
<rect x="220.2" y="543.4" width="8.4" height="3.8" fill="#00ffff"/>
<rect x="229.9" y="544.3" width="8.4" height="2.9" fill="#00ffff"/>
<rect x="239.5" y="544.3" width="8.4" height="2.9" fill="#00ffff"/>
<rect x="249.2" y="544.3" width="8.4" height="2.9" fill="#00ffff"/>
<rect x="258.9" y="544.3" width="8.4" height="2.9" fill="#00ffff"/>
<rect x="268.5" y="544.3" width="8.4" height="2.9" fill="#00ffff"/>
<rect x="278.2" y="542.5" width="8.4" height="4.7" fill="#00ffff"/>
<rect x="287.8" y="543.4" width="8.4" height="3.8" fill="#00ffff"/>
<rect x="297.5" y="543.4" width="8.4" height="3.8" fill="#00ffff"/>
<rect x="307.2" y="544.3" width="8.4" height="2.9" fill="#00ffff"/>
<rect x="316.8" y="543.4" width="8.4" height="3.8" fill="#00ffff"/>
<rect x="326.5" y="543.4" width="8.4" height="3.8" fill="#00ffff"/>
<rect x="336.1" y="543.4" width="8.4" height="3.8" fill="#00ffff"/>
<rect x="345.8" y="545.2" width="8.4" height="2.0" fill="#00ffff"/>
<rect x="355.5" y="544.3" width="8.4" height="2.9" fill="#00ffff"/>
<rect x="365.1" y="545.2" width="8.4" height="2.0" fill="#00ffff"/>
<rect x="374.8" y="545.2" width="8.4" height="2.0" fill="#00ffff"/>
<rect x="384.4" y="543.4" width="8.4" height="3.8" fill="#00ffff"/>
<rect x="394.1" y="543.4" width="8.4" height="3.8" fill="#00ffff"/>
<rect x="403.8" y="542.5" width="8.4" height="4.7" fill="#00ffff"/>
<rect x="413.4" y="544.9" width="8.4" height="2.3" fill="#00ffff"/>
<rect x="423.1" y="542.5" width="8.4" height="4.7" fill="#00ffff"/>
<rect x="432.7" y="539.6" width="8.4" height="7.6" fill="#00ffff"/>
<rect x="442.4" y="538.4" width="8.4" height="8.8" fill="#00ffff"/>
<rect x="452.1" y="542.5" width="8.4" height="4.7" fill="#00ffff"/>
<rect x="461.7" y="541.6" width="8.4" height="5.6" fill="#00ffff"/>
<rect x="471.4" y="541.6" width="8.4" height="5.6" fill="#00ffff"/>
<rect x="481.0" y="543.4" width="8.4" height="3.8" fill="#00ffff"/>
<rect x="490.7" y="545.2" width="8.4" height="2.0" fill="#00ffff"/>
<rect x="500.4" y="545.2" width="8.4" height="2.0" fill="#00ffff"/>
<rect x="510.0" y="544.3" width="8.4" height="2.9" fill="#00ffff"/>
<rect x="519.7" y="544.3" width="8.4" height="2.9" fill="#00ffff"/>
<rect x="529.3" y="545.2" width="8.4" height="2.0" fill="#00ffff"/>
<rect x="539.0" y="545.2" width="8.4" height="2.0" fill="#00ffff"/>
<rect x="548.7" y="545.2" width="8.4" height="2.0" fill="#00ffff"/>
<rect x="558.3" y="544.3" width="8.4" height="2.9" fill="#00ffff"/>
<rect x="568.0" y="544.3" width="8.4" height="2.9" fill="#00ffff"/>
<rect x="577.6" y="545.2" width="8.4" height="2.0" fill="#00ffff"/>
<rect x="587.3" y="545.2" width="8.4" height="2.0" fill="#00ffff"/>
<rect x="597.0" y="543.4" width="8.4" height="3.8" fill="#00ffff"/>
<rect x="606.6" y="544.3" width="8.4" height="2.9" fill="#00ffff"/>
<rect x="616.3" y="543.4" width="8.4" height="3.8" fill="#00ffff"/>
<rect x="625.9" y="541.6" width="8.4" height="5.6" fill="#00ffff"/>
<rect x="635.6" y="545.2" width="8.4" height="2.0" fill="#00ffff"/>
<rect x="645.3" y="544.3" width="8.4" height="2.9" fill="#00ffff"/>
<rect x="654.9" y="544.3" width="8.4" height="2.9" fill="#00ffff"/>
<rect x="664.6" y="544.3" width="8.4" height="2.9" fill="#00ffff"/>
<rect x="674.2" y="545.2" width="8.4" height="2.0" fill="#00ffff"/>
<rect x="683.9" y="543.4" width="8.4" height="3.8" fill="#00ffff"/>
<rect x="693.6" y="544.3" width="8.4" height="2.9" fill="#00ffff"/>
<rect x="703.2" y="544.3" width="8.4" height="2.9" fill="#00ffff"/>
<rect x="712.9" y="543.4" width="8.4" height="3.8" fill="#00ffff"/>
<rect x="722.5" y="538.4" width="8.4" height="8.8" fill="#00ffff"/>
<rect x="732.2" y="541.6" width="8.4" height="5.6" fill="#00ffff"/>
<rect x="741.9" y="542.5" width="8.4" height="4.7" fill="#00ffff"/>
<rect x="751.5" y="542.5" width="8.4" height="4.7" fill="#00ffff"/>
<rect x="761.2" y="544.3" width="8.4" height="2.9" fill="#00ffff"/>
<rect x="770.8" y="544.3" width="8.4" height="2.9" fill="#00ffff"/>
<rect x="780.5" y="541.6" width="8.4" height="5.6" fill="#00ffff"/>
<rect x="790.2" y="544.3" width="8.4" height="2.9" fill="#00ffff"/>
<rect x="799.8" y="541.6" width="8.4" height="5.6" fill="#00ffff"/>
<rect x="809.5" y="542.5" width="8.4" height="4.7" fill="#00ffff"/>
<rect x="819.1" y="541.6" width="8.4" height="5.6" fill="#00ffff"/>
<rect x="828.8" y="544.3" width="8.4" height="2.9" fill="#00ffff"/>
<rect x="838.5" y="535.2" width="8.4" height="12.0" fill="#00ffff"/>
<rect x="848.1" y="538.4" width="8.4" height="8.8" fill="#00ffff"/>
<rect x="857.8" y="533.7" width="8.4" height="13.5" fill="#00ffff"/>
<rect x="867.4" y="540.2" width="8.4" height="7.0" fill="#00ffff"/>
<rect x="877.1" y="541.0" width="8.4" height="6.2" fill="#00ffff"/>
<rect x="886.8" y="541.0" width="8.4" height="6.2" fill="#00ffff"/>
<rect x="896.4" y="539.3" width="8.4" height="7.9" fill="#00ffff"/>
<rect x="906.1" y="542.5" width="8.4" height="4.7" fill="#00ffff"/>
<rect x="915.7" y="545.2" width="8.4" height="2.0" fill="#00ffff"/>
<text x="974.00" y="55.80" font-size="10.39" fill="#bcbcbc" class="s" textLength="4.90" lengthAdjust="spacingAndGlyphs" >5</text>
<text x="978.90" y="55.80" font-size="10.58" fill="#bcbcbc" class="m" textLength="4.90" lengthAdjust="spacingAndGlyphs" >,</text>
<text x="983.80" y="55.80" font-size="10.39" fill="#bcbcbc" class="s" textLength="14.70" lengthAdjust="spacingAndGlyphs" >500</text>
<text x="974.00" y="92.00" font-size="10.39" fill="#bcbcbc" class="s" textLength="4.90" lengthAdjust="spacingAndGlyphs" >5</text>
<text x="978.90" y="92.00" font-size="10.58" fill="#bcbcbc" class="m" textLength="4.90" lengthAdjust="spacingAndGlyphs" >,</text>
<text x="983.80" y="92.00" font-size="10.39" fill="#bcbcbc" class="s" textLength="14.70" lengthAdjust="spacingAndGlyphs" >250</text>
<text x="974.00" y="128.10" font-size="10.39" fill="#bcbcbc" class="s" textLength="4.90" lengthAdjust="spacingAndGlyphs" >5</text>
<text x="978.90" y="128.10" font-size="10.58" fill="#bcbcbc" class="m" textLength="4.90" lengthAdjust="spacingAndGlyphs" >,</text>
<text x="983.80" y="128.10" font-size="10.39" fill="#bcbcbc" class="s" textLength="14.70" lengthAdjust="spacingAndGlyphs" >000</text>
<text x="974.00" y="164.10" font-size="10.39" fill="#bcbcbc" class="s" textLength="4.90" lengthAdjust="spacingAndGlyphs" >4</text>
<text x="978.90" y="164.10" font-size="10.58" fill="#bcbcbc" class="m" textLength="4.90" lengthAdjust="spacingAndGlyphs" >,</text>
<text x="983.80" y="164.10" font-size="10.39" fill="#bcbcbc" class="s" textLength="14.70" lengthAdjust="spacingAndGlyphs" >750</text>
<text x="974.00" y="200.20" font-size="10.39" fill="#bcbcbc" class="s" textLength="4.90" lengthAdjust="spacingAndGlyphs" >4</text>
<text x="978.90" y="200.20" font-size="10.58" fill="#bcbcbc" class="m" textLength="4.90" lengthAdjust="spacingAndGlyphs" >,</text>
<text x="983.80" y="200.20" font-size="10.39" fill="#bcbcbc" class="s" textLength="14.70" lengthAdjust="spacingAndGlyphs" >500</text>
<text x="974.00" y="236.70" font-size="10.39" fill="#bcbcbc" class="s" textLength="4.90" lengthAdjust="spacingAndGlyphs" >4</text>
<text x="978.90" y="236.70" font-size="10.58" fill="#bcbcbc" class="m" textLength="4.90" lengthAdjust="spacingAndGlyphs" >,</text>
<text x="983.80" y="236.70" font-size="10.39" fill="#bcbcbc" class="s" textLength="14.70" lengthAdjust="spacingAndGlyphs" >250</text>
<text x="974.00" y="273.00" font-size="10.39" fill="#bcbcbc" class="s" textLength="4.90" lengthAdjust="spacingAndGlyphs" >4</text>
<text x="978.90" y="273.00" font-size="10.58" fill="#bcbcbc" class="m" textLength="4.90" lengthAdjust="spacingAndGlyphs" >,</text>
<text x="983.80" y="273.00" font-size="10.39" fill="#bcbcbc" class="s" textLength="14.70" lengthAdjust="spacingAndGlyphs" >000</text>
<text x="978.40" y="302.20" font-size="10.39" fill="#bcbcbc" class="s" textLength="14.70" lengthAdjust="spacingAndGlyphs" >250</text>
<text x="993.10" y="302.20" font-size="10.58" fill="#bcbcbc" class="m" textLength="4.90" lengthAdjust="spacingAndGlyphs" >.</text>
<text x="998.00" y="302.20" font-size="10.39" fill="#bcbcbc" class="s" textLength="19.60" lengthAdjust="spacingAndGlyphs" >0000</text>
<text x="978.40" y="330.00" font-size="10.39" fill="#bcbcbc" class="s" textLength="14.70" lengthAdjust="spacingAndGlyphs" >200</text>
<text x="993.10" y="330.00" font-size="10.58" fill="#bcbcbc" class="m" textLength="4.90" lengthAdjust="spacingAndGlyphs" >.</text>
<text x="998.00" y="330.00" font-size="10.39" fill="#bcbcbc" class="s" textLength="19.60" lengthAdjust="spacingAndGlyphs" >0000</text>
<text x="978.40" y="357.70" font-size="10.39" fill="#bcbcbc" class="s" textLength="14.70" lengthAdjust="spacingAndGlyphs" >150</text>
<text x="993.10" y="357.70" font-size="10.58" fill="#bcbcbc" class="m" textLength="4.90" lengthAdjust="spacingAndGlyphs" >.</text>
<text x="998.00" y="357.70" font-size="10.39" fill="#bcbcbc" class="s" textLength="19.60" lengthAdjust="spacingAndGlyphs" >0000</text>
<text x="978.40" y="385.50" font-size="10.39" fill="#bcbcbc" class="s" textLength="14.70" lengthAdjust="spacingAndGlyphs" >100</text>
<text x="993.10" y="385.50" font-size="10.58" fill="#bcbcbc" class="m" textLength="4.90" lengthAdjust="spacingAndGlyphs" >.</text>
<text x="998.00" y="385.50" font-size="10.39" fill="#bcbcbc" class="s" textLength="19.60" lengthAdjust="spacingAndGlyphs" >0000</text>
<text x="983.30" y="413.30" font-size="10.39" fill="#bcbcbc" class="s" textLength="9.80" lengthAdjust="spacingAndGlyphs" >50</text>
<text x="993.10" y="413.30" font-size="10.58" fill="#bcbcbc" class="m" textLength="4.90" lengthAdjust="spacingAndGlyphs" >.</text>
<text x="998.00" y="413.30" font-size="10.39" fill="#bcbcbc" class="s" textLength="19.60" lengthAdjust="spacingAndGlyphs" >0000</text>
<text x="988.20" y="441.20" font-size="10.39" fill="#bcbcbc" class="s" textLength="4.90" lengthAdjust="spacingAndGlyphs" >0</text>
<text x="993.10" y="441.20" font-size="10.58" fill="#bcbcbc" class="m" textLength="4.90" lengthAdjust="spacingAndGlyphs" >.</text>
<text x="998.00" y="441.20" font-size="10.39" fill="#bcbcbc" class="s" textLength="19.60" lengthAdjust="spacingAndGlyphs" >0000</text>
<text x="978.40" y="469.00" font-size="10.58" fill="#bcbcbc" class="m" textLength="4.90" lengthAdjust="spacingAndGlyphs" >-</text>
<text x="983.30" y="469.00" font-size="10.39" fill="#bcbcbc" class="s" textLength="9.80" lengthAdjust="spacingAndGlyphs" >50</text>
<text x="993.10" y="469.00" font-size="10.58" fill="#bcbcbc" class="m" textLength="4.90" lengthAdjust="spacingAndGlyphs" >.</text>
<text x="998.00" y="469.00" font-size="10.39" fill="#bcbcbc" class="s" textLength="19.60" lengthAdjust="spacingAndGlyphs" >0000</text>
<text x="973.50" y="496.90" font-size="10.58" fill="#bcbcbc" class="m" textLength="4.90" lengthAdjust="spacingAndGlyphs" >-</text>
<text x="978.40" y="496.90" font-size="10.39" fill="#bcbcbc" class="s" textLength="14.70" lengthAdjust="spacingAndGlyphs" >100</text>
<text x="993.10" y="496.90" font-size="10.58" fill="#bcbcbc" class="m" textLength="4.90" lengthAdjust="spacingAndGlyphs" >.</text>
<text x="998.00" y="496.90" font-size="10.39" fill="#bcbcbc" class="s" textLength="19.60" lengthAdjust="spacingAndGlyphs" >0000</text>
<text x="978.30" y="522.40" font-size="10.39" fill="#bcbcbc" class="s" textLength="24.50" lengthAdjust="spacingAndGlyphs" >50000</text>
<text x="998.30" y="545.60" font-size="10.39" fill="#bcbcbc" class="s" textLength="4.90" lengthAdjust="spacingAndGlyphs" >0</text>
<text x="36.50" y="286.30" font-size="10.39" fill="#bcbcbc" class="s" textLength="9.80" lengthAdjust="spacingAndGlyphs" >02</text>
<text x="210.40" y="286.30" font-size="10.39" fill="#bcbcbc" class="s" textLength="9.80" lengthAdjust="spacingAndGlyphs" >03</text>
<text x="403.40" y="286.30" font-size="10.39" fill="#bcbcbc" class="s" textLength="9.80" lengthAdjust="spacingAndGlyphs" >04</text>
<text x="606.40" y="286.30" font-size="10.39" fill="#bcbcbc" class="s" textLength="9.80" lengthAdjust="spacingAndGlyphs" >05</text>
<text x="800.10" y="286.30" font-size="10.39" fill="#bcbcbc" class="s" textLength="9.80" lengthAdjust="spacingAndGlyphs" >06</text>
<rect x="974" y="56" width="47" height="16.6" fill="#dedede"/>
<text x="983.00" y="66.60" font-size="11.22" fill="#000" class="s" textLength="5.29" lengthAdjust="spacingAndGlyphs" font-weight="bold">5</text>
<text x="988.29" y="66.60" font-size="11.11" fill="#000" class="m" textLength="5.29" lengthAdjust="spacingAndGlyphs" font-weight="bold">,</text>
<text x="993.58" y="66.60" font-size="11.22" fill="#000" class="s" textLength="15.88" lengthAdjust="spacingAndGlyphs" font-weight="bold">458</text>
<rect x="6" y="40" width="292" height="11" fill="#000"/>
<text x="6.60" y="49.60" font-size="9.8" fill="#dcdcdc" class="j" textLength="19.60" lengthAdjust="spacingAndGlyphs" >日付</text>
<text x="26.20" y="49.60" font-size="10.58" fill="#dcdcdc" class="m" textLength="4.90" lengthAdjust="spacingAndGlyphs" >:</text>
<text x="31.10" y="49.60" font-size="10.39" fill="#dcdcdc" class="s" textLength="19.60" lengthAdjust="spacingAndGlyphs" >2025</text>
<text x="50.70" y="49.60" font-size="10.58" fill="#dcdcdc" class="m" textLength="4.90" lengthAdjust="spacingAndGlyphs" >/</text>
<text x="55.60" y="49.60" font-size="10.39" fill="#dcdcdc" class="s" textLength="9.80" lengthAdjust="spacingAndGlyphs" >06</text>
<text x="65.40" y="49.60" font-size="10.58" fill="#dcdcdc" class="m" textLength="4.90" lengthAdjust="spacingAndGlyphs" >/</text>
<text x="70.30" y="49.60" font-size="10.39" fill="#dcdcdc" class="s" textLength="9.80" lengthAdjust="spacingAndGlyphs" >18</text>
<text x="85.00" y="49.60" font-size="9.8" fill="#dcdcdc" class="j" textLength="19.60" lengthAdjust="spacingAndGlyphs" >始値</text>
<text x="104.60" y="49.60" font-size="10.58" fill="#dcdcdc" class="m" textLength="4.90" lengthAdjust="spacingAndGlyphs" >:</text>
<text x="109.50" y="49.60" font-size="10.39" fill="#dcdcdc" class="s" textLength="4.90" lengthAdjust="spacingAndGlyphs" >5</text>
<text x="114.40" y="49.60" font-size="10.58" fill="#dcdcdc" class="m" textLength="4.90" lengthAdjust="spacingAndGlyphs" >,</text>
<text x="119.30" y="49.60" font-size="10.39" fill="#dcdcdc" class="s" textLength="14.70" lengthAdjust="spacingAndGlyphs" >389</text>
<text x="138.90" y="49.60" font-size="9.8" fill="#dcdcdc" class="j" textLength="19.60" lengthAdjust="spacingAndGlyphs" >高値</text>
<text x="158.50" y="49.60" font-size="10.58" fill="#dcdcdc" class="m" textLength="4.90" lengthAdjust="spacingAndGlyphs" >:</text>
<text x="163.40" y="49.60" font-size="10.39" fill="#dcdcdc" class="s" textLength="4.90" lengthAdjust="spacingAndGlyphs" >5</text>
<text x="168.30" y="49.60" font-size="10.58" fill="#dcdcdc" class="m" textLength="4.90" lengthAdjust="spacingAndGlyphs" >,</text>
<text x="173.20" y="49.60" font-size="10.39" fill="#dcdcdc" class="s" textLength="14.70" lengthAdjust="spacingAndGlyphs" >477</text>
<text x="192.80" y="49.60" font-size="9.8" fill="#dcdcdc" class="j" textLength="19.60" lengthAdjust="spacingAndGlyphs" >安値</text>
<text x="212.40" y="49.60" font-size="10.58" fill="#dcdcdc" class="m" textLength="4.90" lengthAdjust="spacingAndGlyphs" >:</text>
<text x="217.30" y="49.60" font-size="10.39" fill="#dcdcdc" class="s" textLength="4.90" lengthAdjust="spacingAndGlyphs" >5</text>
<text x="222.20" y="49.60" font-size="10.58" fill="#dcdcdc" class="m" textLength="4.90" lengthAdjust="spacingAndGlyphs" >,</text>
<text x="227.10" y="49.60" font-size="10.39" fill="#dcdcdc" class="s" textLength="14.70" lengthAdjust="spacingAndGlyphs" >382</text>
<text x="246.70" y="49.60" font-size="9.8" fill="#dcdcdc" class="j" textLength="19.60" lengthAdjust="spacingAndGlyphs" >終値</text>
<text x="266.30" y="49.60" font-size="10.58" fill="#dcdcdc" class="m" textLength="4.90" lengthAdjust="spacingAndGlyphs" >:</text>
<text x="271.20" y="49.60" font-size="10.39" fill="#dcdcdc" class="s" textLength="4.90" lengthAdjust="spacingAndGlyphs" >5</text>
<text x="276.10" y="49.60" font-size="10.58" fill="#dcdcdc" class="m" textLength="4.90" lengthAdjust="spacingAndGlyphs" >,</text>
<text x="281.00" y="49.60" font-size="10.39" fill="#dcdcdc" class="s" textLength="14.70" lengthAdjust="spacingAndGlyphs" >458</text>
<rect x="7" y="51.2" width="128.8" height="38.7" fill="#fff" stroke="#8e8e8e" stroke-width="0.6"/>
<text x="7.60" y="59.40" font-size="8.72" fill="#000" class="j" textLength="34.88" lengthAdjust="spacingAndGlyphs" >移動平均</text>
<text x="42.48" y="59.40" font-size="9.42" fill="#000" class="m" textLength="4.36" lengthAdjust="spacingAndGlyphs" >(</text>
<text x="46.84" y="59.40" font-size="8.72" fill="#000" class="j" textLength="17.44" lengthAdjust="spacingAndGlyphs" >白金</text>
<text x="68.64" y="59.40" font-size="8.72" fill="#000" class="j" textLength="34.88" lengthAdjust="spacingAndGlyphs" >先限連続</text>
<text x="103.52" y="59.40" font-size="9.42" fill="#000" class="m" textLength="4.36" lengthAdjust="spacingAndGlyphs" >)</text>
<path d="M120.3 59.5 L123.9 52.8 L127.5 59.5 Z" fill="none" stroke="#333" stroke-width="0.9"/>
<path d="M128.6 53.0 L134.9 59.5 M134.9 53.0 L128.6 59.5" fill="none" stroke="#333" stroke-width="0.9"/>
<line x1="7" x2="15" y1="65.5" y2="65.5" stroke="#d8d860" stroke-width="1.1" stroke-dasharray="2 1"/>
<text x="15.60" y="68.85" font-size="8.72" fill="#000" class="j" textLength="26.16" lengthAdjust="spacingAndGlyphs" >短期線</text>
<text x="41.76" y="68.85" font-size="9.42" fill="#000" class="m" textLength="4.36" lengthAdjust="spacingAndGlyphs" >(</text>
<text x="46.12" y="68.85" font-size="9.24" fill="#000" class="s" textLength="4.36" lengthAdjust="spacingAndGlyphs" >9</text>
<text x="50.48" y="68.85" font-size="9.42" fill="#000" class="m" textLength="8.72" lengthAdjust="spacingAndGlyphs" >)(</text>
<text x="59.20" y="68.85" font-size="9.24" fill="#000" class="s" textLength="4.36" lengthAdjust="spacingAndGlyphs" >0</text>
<text x="63.56" y="68.85" font-size="9.42" fill="#000" class="m" textLength="43.60" lengthAdjust="spacingAndGlyphs" >)(SMA)(C):</text>
<text x="107.16" y="68.85" font-size="9.24" fill="#000" class="s" textLength="4.36" lengthAdjust="spacingAndGlyphs" >5</text>
<text x="111.52" y="68.85" font-size="9.42" fill="#000" class="m" textLength="4.36" lengthAdjust="spacingAndGlyphs" >,</text>
<text x="115.88" y="68.85" font-size="9.24" fill="#000" class="s" textLength="13.08" lengthAdjust="spacingAndGlyphs" >386</text>
<line x1="7" x2="15" y1="74.9" y2="74.9" stroke="#40c4e8" stroke-width="1.1"/>
<text x="15.60" y="78.30" font-size="8.72" fill="#000" class="j" textLength="26.16" lengthAdjust="spacingAndGlyphs" >中期線</text>
<text x="41.76" y="78.30" font-size="9.42" fill="#000" class="m" textLength="4.36" lengthAdjust="spacingAndGlyphs" >(</text>
<text x="46.12" y="78.30" font-size="9.24" fill="#000" class="s" textLength="8.72" lengthAdjust="spacingAndGlyphs" >26</text>
<text x="54.84" y="78.30" font-size="9.42" fill="#000" class="m" textLength="8.72" lengthAdjust="spacingAndGlyphs" >)(</text>
<text x="63.56" y="78.30" font-size="9.24" fill="#000" class="s" textLength="4.36" lengthAdjust="spacingAndGlyphs" >0</text>
<text x="67.92" y="78.30" font-size="9.42" fill="#000" class="m" textLength="43.60" lengthAdjust="spacingAndGlyphs" >)(SMA)(C):</text>
<text x="111.52" y="78.30" font-size="9.24" fill="#000" class="s" textLength="4.36" lengthAdjust="spacingAndGlyphs" >4</text>
<text x="115.88" y="78.30" font-size="9.42" fill="#000" class="m" textLength="4.36" lengthAdjust="spacingAndGlyphs" >,</text>
<text x="120.24" y="78.30" font-size="9.24" fill="#000" class="s" textLength="13.08" lengthAdjust="spacingAndGlyphs" >911</text>
<line x1="7" x2="15" y1="84.3" y2="84.3" stroke="#20b020" stroke-width="1.1"/>
<text x="15.60" y="87.75" font-size="8.72" fill="#000" class="j" textLength="26.16" lengthAdjust="spacingAndGlyphs" >長期線</text>
<text x="41.76" y="87.75" font-size="9.42" fill="#000" class="m" textLength="4.36" lengthAdjust="spacingAndGlyphs" >(</text>
<text x="46.12" y="87.75" font-size="9.24" fill="#000" class="s" textLength="8.72" lengthAdjust="spacingAndGlyphs" >52</text>
<text x="54.84" y="87.75" font-size="9.42" fill="#000" class="m" textLength="8.72" lengthAdjust="spacingAndGlyphs" >)(</text>
<text x="63.56" y="87.75" font-size="9.24" fill="#000" class="s" textLength="4.36" lengthAdjust="spacingAndGlyphs" >0</text>
<text x="67.92" y="87.75" font-size="9.42" fill="#000" class="m" textLength="43.60" lengthAdjust="spacingAndGlyphs" >)(SMA)(C):</text>
<text x="111.52" y="87.75" font-size="9.24" fill="#000" class="s" textLength="4.36" lengthAdjust="spacingAndGlyphs" >4</text>
<text x="115.88" y="87.75" font-size="9.42" fill="#000" class="m" textLength="4.36" lengthAdjust="spacingAndGlyphs" >,</text>
<text x="120.24" y="87.75" font-size="9.24" fill="#000" class="s" textLength="13.08" lengthAdjust="spacingAndGlyphs" >635</text>
<rect x="7" y="293.4" width="115.4" height="38.9" fill="#fff" stroke="#8e8e8e" stroke-width="0.6"/>
<text x="7.60" y="301.60" font-size="9.42" fill="#000" class="m" textLength="21.80" lengthAdjust="spacingAndGlyphs" >MACD(</text>
<text x="29.40" y="301.60" font-size="8.72" fill="#000" class="j" textLength="17.44" lengthAdjust="spacingAndGlyphs" >白金</text>
<text x="51.20" y="301.60" font-size="8.72" fill="#000" class="j" textLength="34.88" lengthAdjust="spacingAndGlyphs" >先限連続</text>
<text x="86.08" y="301.60" font-size="9.42" fill="#000" class="m" textLength="4.36" lengthAdjust="spacingAndGlyphs" >)</text>
<path d="M106.9 301.7 L110.5 295.0 L114.1 301.7 Z" fill="none" stroke="#333" stroke-width="0.9"/>
<path d="M115.2 295.2 L121.5 301.7 M121.5 295.2 L115.2 301.7" fill="none" stroke="#333" stroke-width="0.9"/>
<line x1="7" x2="15" y1="307.6" y2="307.6" stroke="#e02020" stroke-width="1.1"/>
<text x="15.60" y="311.05" font-size="9.42" fill="#000" class="m" textLength="21.80" lengthAdjust="spacingAndGlyphs" >MACD(</text>
<text x="37.40" y="311.05" font-size="9.24" fill="#000" class="s" textLength="8.72" lengthAdjust="spacingAndGlyphs" >10</text>
<text x="46.12" y="311.05" font-size="9.42" fill="#000" class="m" textLength="8.72" lengthAdjust="spacingAndGlyphs" >)(</text>
<text x="54.84" y="311.05" font-size="9.24" fill="#000" class="s" textLength="8.72" lengthAdjust="spacingAndGlyphs" >20</text>
<text x="63.56" y="311.05" font-size="9.42" fill="#000" class="m" textLength="21.80" lengthAdjust="spacingAndGlyphs" >)(C):</text>
<text x="85.36" y="311.05" font-size="9.24" fill="#000" class="s" textLength="13.08" lengthAdjust="spacingAndGlyphs" >200</text>
<text x="98.44" y="311.05" font-size="9.42" fill="#000" class="m" textLength="4.36" lengthAdjust="spacingAndGlyphs" >.</text>
<text x="102.80" y="311.05" font-size="9.24" fill="#000" class="s" textLength="17.44" lengthAdjust="spacingAndGlyphs" >7886</text>
<line x1="7" x2="15" y1="317.1" y2="317.1" stroke="#20c020" stroke-width="1.1" stroke-dasharray="2 1"/>
<text x="15.60" y="320.50" font-size="8.72" fill="#000" class="j" textLength="34.88" lengthAdjust="spacingAndGlyphs" >シグナル</text>
<text x="50.48" y="320.50" font-size="9.42" fill="#000" class="m" textLength="4.36" lengthAdjust="spacingAndGlyphs" >(</text>
<text x="54.84" y="320.50" font-size="9.24" fill="#000" class="s" textLength="8.72" lengthAdjust="spacingAndGlyphs" >10</text>
<text x="63.56" y="320.50" font-size="9.42" fill="#000" class="m" textLength="8.72" lengthAdjust="spacingAndGlyphs" >):</text>
<text x="72.28" y="320.50" font-size="9.24" fill="#000" class="s" textLength="13.08" lengthAdjust="spacingAndGlyphs" >172</text>
<text x="85.36" y="320.50" font-size="9.42" fill="#000" class="m" textLength="4.36" lengthAdjust="spacingAndGlyphs" >.</text>
<text x="89.72" y="320.50" font-size="9.24" fill="#000" class="s" textLength="17.44" lengthAdjust="spacingAndGlyphs" >6323</text>
<rect x="7" y="324.8" width="8" height="3.9" fill="#00ffff"/>
<text x="15.60" y="329.95" font-size="9.42" fill="#000" class="m" textLength="17.44" lengthAdjust="spacingAndGlyphs" >MACD</text>
<text x="33.04" y="329.95" font-size="8.72" fill="#000" class="j" textLength="43.60" lengthAdjust="spacingAndGlyphs" >オシレータ</text>
<text x="76.64" y="329.95" font-size="9.42" fill="#000" class="m" textLength="4.36" lengthAdjust="spacingAndGlyphs" >:</text>
<text x="81.00" y="329.95" font-size="9.24" fill="#000" class="s" textLength="8.72" lengthAdjust="spacingAndGlyphs" >28</text>
<text x="89.72" y="329.95" font-size="9.42" fill="#000" class="m" textLength="4.36" lengthAdjust="spacingAndGlyphs" >.</text>
<text x="94.08" y="329.95" font-size="9.24" fill="#000" class="s" textLength="17.44" lengthAdjust="spacingAndGlyphs" >1563</text>
<clipPath id="vc"><rect x="6" y="514" width="160" height="34"/></clipPath><g clip-path="url(#vc)">
<rect x="7" y="514.4" width="155.6" height="40" fill="#fff" stroke="#8e8e8e" stroke-width="0.6"/>
<text x="7.60" y="522.60" font-size="8.72" fill="#000" class="j" textLength="26.16" lengthAdjust="spacingAndGlyphs" >出来高</text>
<text x="33.76" y="522.60" font-size="9.42" fill="#000" class="m" textLength="4.36" lengthAdjust="spacingAndGlyphs" >(</text>
<text x="38.12" y="522.60" font-size="8.72" fill="#000" class="j" textLength="17.44" lengthAdjust="spacingAndGlyphs" >白金</text>
<text x="59.92" y="522.60" font-size="8.72" fill="#000" class="j" textLength="34.88" lengthAdjust="spacingAndGlyphs" >先限連続</text>
<text x="94.80" y="522.60" font-size="9.42" fill="#000" class="m" textLength="4.36" lengthAdjust="spacingAndGlyphs" >)</text>
<path d="M147.1 522.7 L150.7 516.0 L154.3 522.7 Z" fill="none" stroke="#333" stroke-width="0.9"/>
<path d="M155.4 516.2 L161.7 522.7 M161.7 516.2 L155.4 522.7" fill="none" stroke="#333" stroke-width="0.9"/>
<rect x="7" y="526.9" width="8" height="3.9" fill="#00ffff"/>
<text x="15.60" y="532.05" font-size="8.72" fill="#000" class="j" textLength="26.16" lengthAdjust="spacingAndGlyphs" >出来高</text>
<text x="41.76" y="532.05" font-size="9.42" fill="#000" class="m" textLength="4.36" lengthAdjust="spacingAndGlyphs" >:</text>
<text x="46.12" y="532.05" font-size="9.24" fill="#000" class="s" textLength="17.44" lengthAdjust="spacingAndGlyphs" >4292</text>
<line x1="7" x2="15" y1="538.1" y2="538.1" stroke="#30c030" stroke-width="1.1"/>
<text x="15.60" y="541.50" font-size="8.72" fill="#000" class="j" textLength="61.04" lengthAdjust="spacingAndGlyphs" >出来高移動平均</text>
<text x="76.64" y="541.50" font-size="9.42" fill="#000" class="m" textLength="4.36" lengthAdjust="spacingAndGlyphs" >(</text>
<text x="81.00" y="541.50" font-size="9.24" fill="#000" class="s" textLength="4.36" lengthAdjust="spacingAndGlyphs" >9</text>
<text x="85.36" y="541.50" font-size="9.42" fill="#000" class="m" textLength="30.52" lengthAdjust="spacingAndGlyphs" >)(SMA):</text>
<text x="115.88" y="541.50" font-size="9.24" fill="#000" class="s" textLength="21.80" lengthAdjust="spacingAndGlyphs" >15777</text>
<line x1="7" x2="15" y1="547.6" y2="547.6" stroke="#ff9090" stroke-width="1.1" stroke-dasharray="2 1"/>
<text x="15.60" y="550.95" font-size="9.42" fill="#000" class="m" textLength="17.44" lengthAdjust="spacingAndGlyphs" >Slow</text>
<text x="33.04" y="550.95" font-size="8.72" fill="#000" class="j" textLength="61.04" lengthAdjust="spacingAndGlyphs" >出来高移動平均</text>
<text x="94.08" y="550.95" font-size="9.42" fill="#000" class="m" textLength="4.36" lengthAdjust="spacingAndGlyphs" >(</text>
<text x="98.44" y="550.95" font-size="9.24" fill="#000" class="s" textLength="8.72" lengthAdjust="spacingAndGlyphs" >26</text>
<text x="107.16" y="550.95" font-size="9.42" fill="#000" class="m" textLength="30.52" lengthAdjust="spacingAndGlyphs" >)(SMA):</text>
<text x="137.68" y="550.95" font-size="9.24" fill="#000" class="s" textLength="21.80" lengthAdjust="spacingAndGlyphs" >11213</text>
</g>
<path d="M8.5 5.8V16.5H19.2" fill="none" stroke="#8c8c8c" stroke-width="1"/>
<polyline points="10.2,14.2 11.6,11 13.2,12.4 14.6,9.4 16.4,7.6 18,11.2" fill="none" stroke="#4a90e0" stroke-width="1.3"/>
<circle cx="10.2" cy="14.2" r="0.9" fill="#f03838"/>
<circle cx="11.6" cy="11" r="0.9" fill="#f03838"/>
<circle cx="13.2" cy="12.4" r="0.9" fill="#f03838"/>
<circle cx="14.6" cy="9.4" r="0.9" fill="#f03838"/>
<circle cx="16.4" cy="7.6" r="0.9" fill="#f03838"/>
<circle cx="18" cy="11.2" r="0.9" fill="#f03838"/>
<g stroke="#7c7c7c" fill="none" stroke-width="1.2" stroke-linecap="round"><path d="M926 16.5L936.5 6.5"/><rect x="926.8" y="10.2" width="4.6" height="3" rx="1.4" transform="rotate(-44 929 11.7)"/><rect x="931" y="8.3" width="4.6" height="3" rx="1.4" transform="rotate(-44 933.3 9.8)"/></g>
<g stroke="#707070" fill="none" stroke-width="1.7"><path d="M951.2 9.4A4.2 4.2 0 1 0 951.6 13.8"/></g><path d="M949 6.2L953.2 6.6L952.6 10.6Z" fill="#707070"/><rect x="947.6" y="11.4" width="5.4" height="3.4" fill="#f2f2f2" stroke="#707070" stroke-width="0.9"/>
<g stroke="#7a7a7a" fill="#ececec" stroke-width="1.1"><rect x="957.6" y="6.5" width="8" height="8.4"/><rect x="960.6" y="9" width="8" height="6.4" fill="#e4e4e4"/></g>
<rect x="979.2" y="13.6" width="5" height="1.6" fill="#555"/>
<rect x="995.2" y="8.2" width="6.4" height="6.2" fill="none" stroke="#555" stroke-width="1.4"/>
<path d="M1011 8L1017.6 14.6M1017.6 8L1011 14.6" stroke="#555" stroke-width="1.5" fill="none"/>
<path d="M107.6 27.8H112.8L110.2 30.8Z" fill="#222"/>
<rect x="140.4" y="22.8" width="10.4" height="6.3" fill="#ececec" stroke="#b8bcc4" stroke-width="0.7"/><rect x="140.4" y="29.3" width="10.4" height="6.3" fill="#ececec" stroke="#b8bcc4" stroke-width="0.7"/>
<path d="M143.4 27.4H147.8L145.6 24.6Z" fill="#222"/><path d="M143.4 31H147.8L145.6 33.8Z" fill="#222"/>
<path d="M160.6 24.2L168.6 28.6L165.2 29.6L168.4 34L166.8 35L163.8 30.6L161.6 33Z" fill="#fff" stroke="#4848c8" stroke-width="1.1" stroke-linejoin="round"/>
<path d="M179.6 34.6C177.6 32 176.6 29.6 177.6 28.8C178.6 28.2 179.6 29.4 180.2 30.2L180.4 25C180.6 24 181.8 24 182 25L182.4 23.8C182.8 23 184 23.2 184 24.2L184.6 24.4C185.2 23.8 186.2 24.2 186.2 25.2L186.6 25.8C187.4 25.6 188 26.2 187.8 27.2L187.4 31.6C187.2 33 186.6 34 186 34.8Z" fill="#fdf3e4" stroke="#e09a48" stroke-width="1.1" stroke-linejoin="round"/>
<path d="M196.2 35L197.4 31.4L205.6 23.4L208 25.8L199.8 33.8Z" fill="#f6c88a" stroke="#e0963c" stroke-width="0.9" stroke-linejoin="round"/><path d="M196.2 35L197.4 31.4L199.8 33.8Z" fill="#a06a30"/>
<rect x="213" y="21.8" width="14.4" height="14.6" fill="#aaaeb6"/><rect x="213.4" y="22.2" width="13.6" height="13.8" fill="none" stroke="#9498a2" stroke-width="0.8"/>
<path d="M215 34.8L216.2 31.6L223.6 24.2L226 26.4L218.4 33.8Z" fill="#6aa8f8" stroke="#2a62d8" stroke-width="0.9" stroke-linejoin="round"/><path d="M221 34.6L223.4 30.6L226 34.6Z" fill="#2450b8"/>
<rect x="237.2" y="22" width="13" height="14.2" fill="#c9ccd3" stroke="#a4a8b2" stroke-width="0.8"/>
<path d="M240.6 22.6V35.6M237.8 26.2H249.8" stroke="#5a50c0" stroke-width="0.9" fill="none"/><path d="M243.2 28.2H248.4V29.6H245.6L248.6 32.6L247.6 33.6L244.6 30.6V33.2H243.2Z" fill="#d020a0"/>
<circle cx="261.6" cy="29" r="5.8" fill="#48b8f4" stroke="#8cd4fa" stroke-width="0.9"/><path d="M258.6 30.6L261.6 27.2L264.6 30.6" fill="none" stroke="#fff" stroke-width="1.5"/>
<rect x="279.4" y="23.8" width="11" height="10.8" fill="#fff" stroke="#3868c8" stroke-width="1.2"/><path d="M279.4 25.2H290.4" stroke="#3868c8" stroke-width="1.6"/><path d="M282 33.8V29M284.6 33.8V30M287.2 33.8V28.4" stroke="#b8bcc8" stroke-width="1.2"/><polyline points="283.4,30 285.6,27.2 287,28.6 289,26" fill="none" stroke="#e83030" stroke-width="1.2"/>
<rect x="297.6" y="23.6" width="11.2" height="11" fill="#fff" stroke="#4a86d8" stroke-width="0.8"/>
<path d="M297.6 25.4H308.8" stroke="#4a86d8" stroke-width="0.9"/>
<path d="M297.6 27.6H308.8" stroke="#4a86d8" stroke-width="0.9"/>
<path d="M297.6 29.8H308.8" stroke="#4a86d8" stroke-width="0.9"/>
<path d="M297.6 32H308.8" stroke="#4a86d8" stroke-width="0.9"/>
<path d="M297.6 34H308.8" stroke="#4a86d8" stroke-width="0.9"/>
<path d="M301.4 23.6V30M305 23.6V30" stroke="#9cc0ec" stroke-width="0.8"/>
<rect x="316" y="23.6" width="11.2" height="10" fill="#f4f6fa" stroke="#4a70d0" stroke-width="0.9"/><path d="M316 26.8H327.2M316 30.2H327.2M319.6 23.6V33.6M323.4 23.6V33.6" stroke="#4a70d0" stroke-width="0.9" fill="none"/>
<rect x="340.4" y="23" width="11.4" height="12" fill="#eceef3" stroke="#c2c6ce" stroke-width="0.6"/>
<rect x="341.6" y="30.2" width="1.5" height="4" fill="#2a86ea"/>
<rect x="344.0" y="26.7" width="1.5" height="7.5" fill="#2a86ea"/>
<rect x="346.4" y="24.7" width="1.5" height="9.5" fill="#2a86ea"/>
<rect x="348.8" y="28.2" width="1.5" height="6" fill="#2a86ea"/>
<path d="M340.8 34.4H351.6" stroke="#7aa4dc" stroke-width="0.7"/>
<path d="M353.6 27.8H358.4L356 30.6Z" fill="#222"/>
<rect x="364.0" y="30.2" width="1.5" height="4" fill="#2a86ea"/>
<rect x="366.4" y="26.7" width="1.5" height="7.5" fill="#2a86ea"/>
<rect x="368.8" y="24.7" width="1.5" height="9.5" fill="#2a86ea"/>
<rect x="371.2" y="28.2" width="1.5" height="6" fill="#2a86ea"/>
<path d="M363.2 34.4H374.0" stroke="#7aa4dc" stroke-width="0.7"/>
<path d="M364.0 25L373.0 33.6M373.0 25L364.0 33.6" stroke="#f03030" stroke-width="1.3"/>
<rect x="380.8" y="23" width="11.4" height="12" fill="#eceef3" stroke="#c2c6ce" stroke-width="0.6"/>
<rect x="382.0" y="29.2" width="1.5" height="5" fill="#2a86ea"/>
<rect x="384.4" y="26.2" width="1.5" height="8" fill="#2a86ea"/>
<rect x="386.8" y="28.2" width="1.5" height="6" fill="#2a86ea"/>
<path d="M381.2 34.4H392.0" stroke="#7aa4dc" stroke-width="0.7"/>
<text x="388.0" y="33.6" font-size="6.4" font-weight="bold" fill="#3858c0" class="s">1</text>
<rect x="399.4" y="23" width="11.4" height="12" fill="#eceef3" stroke="#c2c6ce" stroke-width="0.6"/>
<rect x="400.6" y="29.2" width="1.5" height="5" fill="#2a86ea"/>
<rect x="403.0" y="26.2" width="1.5" height="8" fill="#2a86ea"/>
<rect x="405.4" y="28.2" width="1.5" height="6" fill="#2a86ea"/>
<path d="M399.8 34.4H410.6" stroke="#7aa4dc" stroke-width="0.7"/>
<text x="406.6" y="33.6" font-size="6.4" font-weight="bold" fill="#3858c0" class="s">2</text>
<rect x="417.2" y="23" width="11.4" height="12" fill="#eceef3" stroke="#c2c6ce" stroke-width="0.6"/>
<rect x="418.4" y="29.2" width="1.5" height="5" fill="#2a86ea"/>
<rect x="420.8" y="26.2" width="1.5" height="8" fill="#2a86ea"/>
<rect x="423.2" y="28.2" width="1.5" height="6" fill="#2a86ea"/>
<path d="M417.6 34.4H428.4" stroke="#7aa4dc" stroke-width="0.7"/>
<text x="424.4" y="33.6" font-size="6.4" font-weight="bold" fill="#3858c0" class="s">3</text>
<rect x="435.6" y="23" width="11.4" height="12" fill="#eceef3" stroke="#c2c6ce" stroke-width="0.6"/>
<rect x="436.8" y="29.2" width="1.5" height="5" fill="#2a86ea"/>
<rect x="439.2" y="26.2" width="1.5" height="8" fill="#2a86ea"/>
<rect x="441.6" y="28.2" width="1.5" height="6" fill="#2a86ea"/>
<path d="M436.0 34.4H446.8" stroke="#7aa4dc" stroke-width="0.7"/>
<text x="442.8" y="33.6" font-size="6.4" font-weight="bold" fill="#3858c0" class="s">4</text>
<rect x="454.0" y="23" width="11.4" height="12" fill="#eceef3" stroke="#c2c6ce" stroke-width="0.6"/>
<rect x="455.2" y="29.2" width="1.5" height="5" fill="#2a86ea"/>
<rect x="457.6" y="26.2" width="1.5" height="8" fill="#2a86ea"/>
<rect x="460.0" y="28.2" width="1.5" height="6" fill="#2a86ea"/>
<path d="M454.4 34.4H465.2" stroke="#7aa4dc" stroke-width="0.7"/>
<text x="461.2" y="33.6" font-size="6.4" font-weight="bold" fill="#3858c0" class="s">5</text>
<path d="M484.4 26.2A4.6 4.6 0 1 0 485.4 32.2" fill="none" stroke="#2a8ae8" stroke-width="1.9"/><path d="M477.8 24L482.8 23.6L481.2 27.6Z" fill="#2a6ae0"/><text x="483.6" y="32.4" font-size="7.4" font-weight="bold" fill="#2a6ae0" class="s">R</text>
<path d="M1003 36.2L1009 29.6C1008 27.4 1009.4 24.4 1012.4 24.2L1010.8 26.6L1012.6 28.2L1014.6 26.4C1014.8 29.4 1012.4 31.2 1010.2 30.8L1004.6 37.2Z" fill="#9ec4f8" stroke="#3a6ae0" stroke-width="0.9" stroke-linejoin="round"/>
</svg>
</div>
</body></html>
